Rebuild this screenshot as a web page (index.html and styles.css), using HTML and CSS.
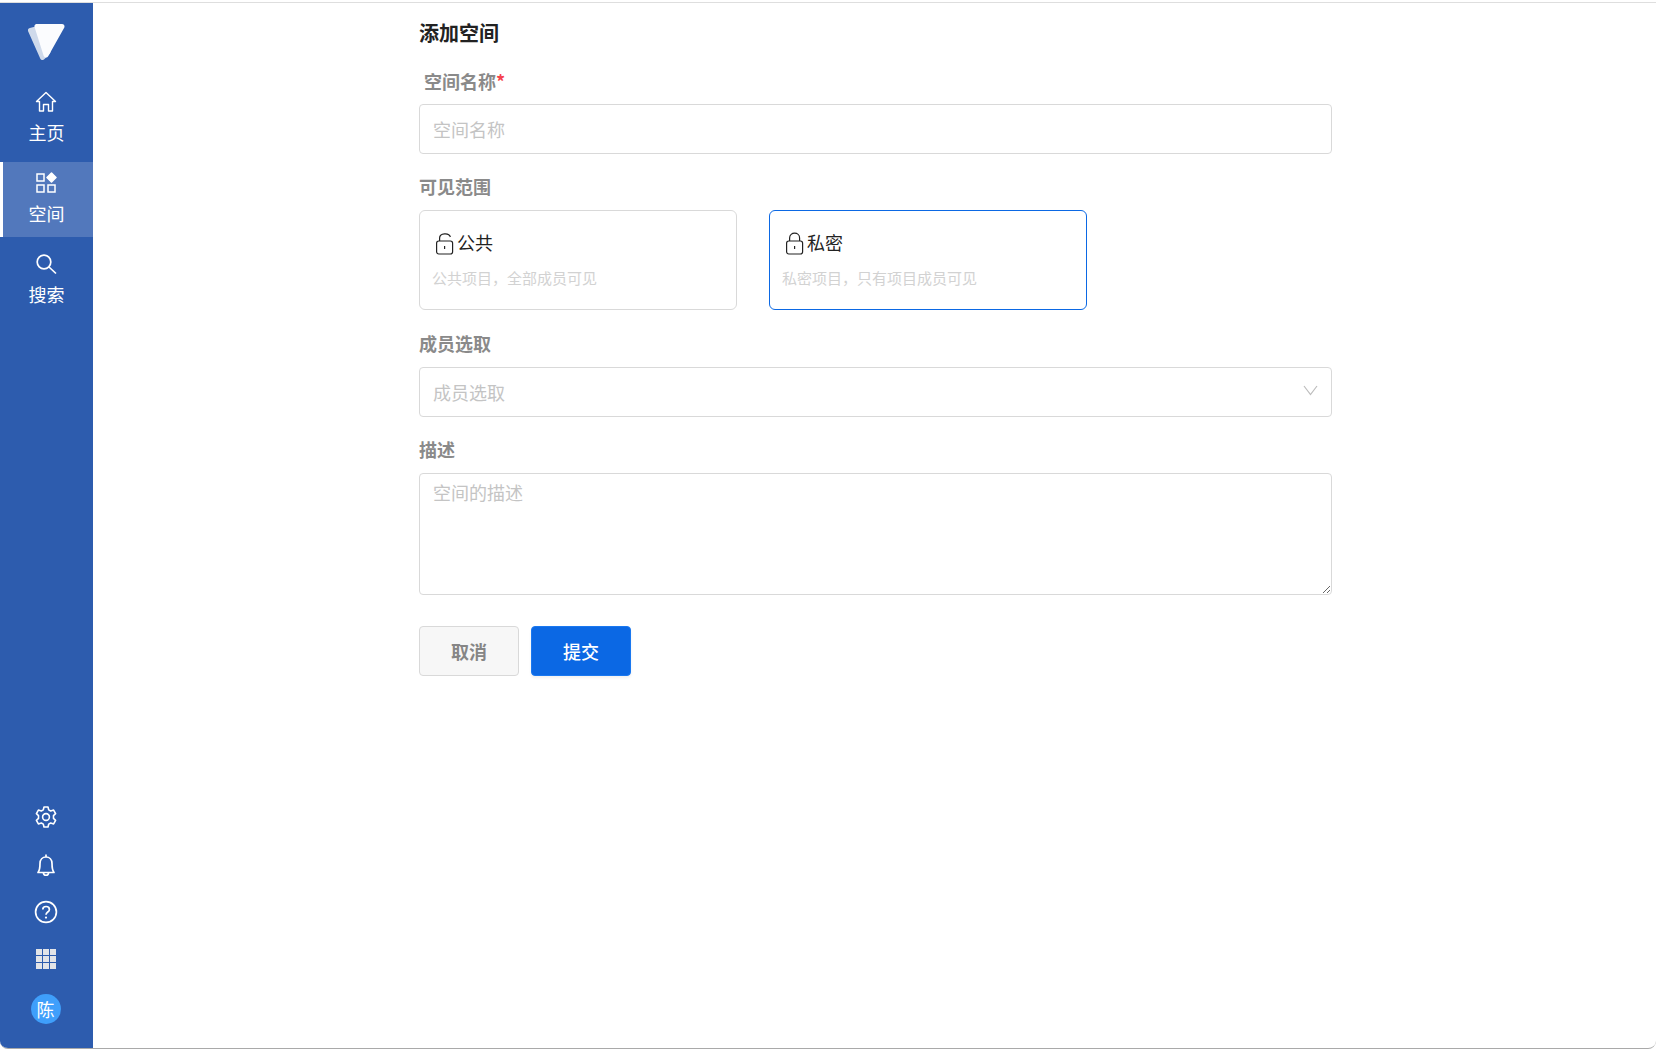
FILE: index.html
```html
<!DOCTYPE html>
<html lang="zh-CN">
<head>
<meta charset="utf-8">
<title>添加空间</title>
<link rel="stylesheet" href="styles.css">
</head>
<body>
<div class="app">
  <aside class="rail">
    <div class="rail-top">
      <div class="logo">
        <svg width="40" height="40" viewBox="0 0 40 40">
          <path d="M4.5 8.5 L16.5 35.5 L22 30 L14 6 Z" fill="#cfdaeb" stroke="#cfdaeb" stroke-width="5" stroke-linejoin="round"/>
          <path d="M11 4.5 L36 4.5 L20 33 Z" fill="#fbfcfe" stroke="#fbfcfe" stroke-width="5" stroke-linejoin="round"/>
        </svg>
      </div>
      <nav class="nav">
        <a class="nav-item">
          <svg class="nav-icon" viewBox="0 0 22 22" fill="none" stroke="#fff" stroke-width="1.4" stroke-linejoin="round"><path d="M11 1.5 L1.5 10.5 L4.5 10.5 L4.5 20 L8.5 20 L8.5 13.5 L13.5 13.5 L13.5 20 L17.5 20 L17.5 10.5 L20.5 10.5 Z"/></svg>
          <span>主页</span>
        </a>
        <a class="nav-item is-active">
          <svg class="nav-icon" viewBox="0 0 22 22" fill="none" stroke="#fff" stroke-width="1.5"><rect x="2" y="2" width="7" height="7"/><rect x="2" y="13" width="7" height="7"/><rect x="13" y="13" width="7" height="7"/><path d="M16.5 1 L21 5.5 L16.5 10 L12 5.5 Z" fill="#fff" stroke-linejoin="round"/></svg>
          <span>空间</span>
        </a>
        <a class="nav-item">
          <svg class="nav-icon" viewBox="0 0 22 22" fill="none" stroke="#fff" stroke-width="1.7"><circle cx="9" cy="9" r="6.8"/><path d="M14 14 L21 20.5"/></svg>
          <span>搜索</span>
        </a>
      </nav>
    </div>
    <div class="rail-bottom">
      <div class="rail-btn rail-btn-first">
        <svg width="24" height="24" viewBox="0 0 24 24" fill="none" stroke="#fff" stroke-width="1.6" stroke-linejoin="round"><circle cx="12" cy="12" r="3.4"/><path d="M10 2 h4 l.7 2.9 2 1.1 2.9-.9 2 3.5-2.1 2 v2.8 l2.1 2-2 3.5-2.9-.9-2 1.1-.7 2.9 h-4 l-.7-2.9-2-1.1-2.9.9-2-3.5 2.1-2 v-2.8 l-2.1-2 2-3.5 2.9.9 2-1.1 Z"/></svg>
      </div>
      <div class="rail-btn">
        <svg width="22" height="24" viewBox="0 0 22 24" fill="none" stroke="#fff" stroke-width="1.7" stroke-linejoin="round"><path d="M3 19.5 C5 17 5 14 5 10.5 C5 6.5 7.5 4 11 4 C14.5 4 17 6.5 17 10.5 C17 14 17 17 19 19.5 Z"/><path d="M11 1.5 V4 M8.5 20 C8.5 23 13.5 23 13.5 20"/></svg>
      </div>
      <div class="rail-btn">
        <svg width="24" height="24" viewBox="0 0 24 24" fill="none" stroke="#fff" stroke-width="1.7"><circle cx="12" cy="12" r="10.4"/><path d="M8.8 9.4 C8.8 5.5 15.4 5.5 15.4 9.4 C15.4 12 12 12 12 14.8"/><circle cx="12" cy="17.6" r="1.1" fill="#fff" stroke="none"/></svg>
      </div>
      <div class="rail-btn">
        <div class="apps"><i></i><i></i><i></i><i></i><i></i><i></i><i></i><i></i><i></i></div>
      </div>
      <div class="avatar">陈</div>
    </div>
  </aside>
  <main class="main">
    <form class="form">
      <h1 class="title">添加空间</h1>
      <div class="field field-name">
        <label class="label label-inset">空间名称<em class="req">*</em></label>
        <input class="control" type="text" placeholder="空间名称">
      </div>
      <div class="field field-scope">
        <label class="label">可见范围</label>
        <div class="cards">
          <div class="card">
            <div class="card-title">
              <svg class="lock" width="19" height="23" viewBox="0 0 19 23" fill="none" stroke="#222" stroke-width="1.2"><rect x="1.6" y="9" width="16" height="13" rx="2.2"/><path d="M4.6 9 V6 C4.6 1 14 0.2 15.4 5"/><path d="M9.6 14 V17"/></svg>
              <span>公共</span>
            </div>
            <p class="card-desc">公共项目，全部成员可见</p>
          </div>
          <div class="card is-selected">
            <div class="card-title">
              <svg class="lock" width="19" height="23" viewBox="0 0 19 23" fill="none" stroke="#222" stroke-width="1.2"><rect x="1.6" y="9" width="16" height="13" rx="2.2"/><path d="M4.6 9 V6 C4.6 -0.4 14.6 -0.4 14.6 6 V9"/><path d="M9.6 14 V17"/></svg>
              <span>私密</span>
            </div>
            <p class="card-desc">私密项目，只有项目成员可见</p>
          </div>
        </div>
      </div>
      <div class="field">
        <label class="label">成员选取</label>
        <div class="control select">
          <span class="placeholder">成员选取</span>
          <svg class="chevron" width="15" height="11" viewBox="0 0 15 11" fill="none" stroke="#bdbdbd" stroke-width="1.2"><path d="M1 1 L7.5 9.5 L14 1"/></svg>
        </div>
      </div>
      <div class="field">
        <label class="label">描述</label>
        <textarea class="control area" placeholder="空间的描述"></textarea>
      </div>
      <div class="actions">
        <button class="btn btn-cancel" type="button">取消</button>
        <button class="btn btn-submit" type="button">提交</button>
      </div>
    </form>
  </main>
</div>
</body>
</html>
```

FILE: styles.css
```css
* { box-sizing: border-box; }
html, body { margin: 0; height: 100%; background: #fff; }
body {
  font-family: "Noto Sans CJK SC", "Liberation Sans", sans-serif;
  padding-top: 2px;
}
.app {
  display: flex;
  height: 1047px;
  border-top: 1px solid #dedede;
  border-bottom: 1px solid #a9a9a9;
  border-radius: 0 0 8px 8px;
  overflow: hidden;
}
.rail {
  width: 93px;
  flex: none;
  background: #2d5cae;
  color: #fff;
  display: flex;
  flex-direction: column;
  justify-content: space-between;
}
.logo {
  height: 78px;
  padding: 19px 0 0 26px;
}
.logo svg { display: block; }
.nav { display: flex; flex-direction: column; gap: 6px; }
.nav-item {
  height: 75px;
  padding-top: 10px;
  display: flex;
  flex-direction: column;
  align-items: center;
  gap: 7px;
  font-size: 18px;
  line-height: 24px;
}
.nav-icon { width: 22px; height: 22px; flex: none; margin-right: 2px; }
.is-active {
  background: #5278bc;
  box-shadow: inset 3px 0 0 #fff;
}
.rail-bottom {
  display: flex;
  flex-direction: column;
  align-items: center;
  padding-bottom: 24px;
}
.rail-btn {
  height: 47px;
  width: 100%;
  padding-right: 2px;
  display: flex;
  align-items: center;
  justify-content: center;
}
.rail-btn-first { padding-bottom: 2px; }
.apps {
  display: grid;
  grid-template-columns: repeat(3, 6px);
  grid-auto-rows: 6px;
  gap: 1px;
}
.apps i { background: #e2e4e8; }
.avatar {
  width: 30px;
  height: 30px;
  margin: 12px 2px 0 0;
  border-radius: 50%;
  background: #3f9ffb;
  font-size: 18px;
  line-height: 30px;
  text-align: center;
}
.main { flex: 1; min-width: 0; padding-left: 326px; }
.form { width: 913px; display: flex; flex-direction: column; }
.title {
  margin: 16px 0 0;
  font-size: 20px;
  line-height: 28px;
  font-weight: 700;
  color: #222;
}
.field { margin-top: 20px; display: flex; flex-direction: column; }
.field-name { margin-top: 22px; }
.field-scope { padding-bottom: 1px; }
.label {
  display: block;
  margin-bottom: 12px;
  font-size: 18px;
  line-height: 24px;
  font-weight: 700;
  color: #8a8a8a;
}
.label-inset { padding-left: 5px; margin-bottom: 11px; }
.req { font-style: normal; color: #f5434e; }
.control {
  width: 100%;
  height: 50px;
  padding: 0 13px;
  border: 1px solid #d9d9d9;
  border-radius: 4px;
  background: #fff;
  outline: none;
  font-family: inherit;
  font-size: 18px;
  color: #333;
}
.control::placeholder, .placeholder { color: #c4c4c4; opacity: 1; }
.select {
  display: flex;
  align-items: center;
  justify-content: space-between;
  padding-right: 13px;
  padding-bottom: 1px;
}
.chevron { margin-bottom: 2px; }
.area {
  height: 122px;
  padding: 5px 13px;
  line-height: 26px;
  resize: both;
  display: block;
}
.cards { display: flex; gap: 32px; }
.card {
  width: 318px;
  height: 100px;
  padding: 17px 12px 0;
  border: 1px solid #d9d9d9;
  border-radius: 6px;
}
.card.is-selected { border-color: #0b68e4; }
.card-title {
  display: flex;
  align-items: center;
  gap: 3px;
  padding-left: 3px;
  height: 28px;
  font-size: 18px;
  line-height: 28px;
  color: #222;
}
.lock { margin-top: 3px; }
.card-desc {
  margin: 11px 0 0;
  font-size: 15px;
  line-height: 22px;
  color: #d2d2d2;
}
.actions { display: flex; gap: 12px; margin-top: 31px; }
.btn {
  width: 100px;
  height: 50px;
  border-radius: 4px;
  font-family: inherit;
  font-size: 18px;
}
.btn-cancel {
  background: #f7f7f7;
  border: 1px solid #d9d9d9;
  color: #868686;
  font-weight: 700;
}
.btn-submit {
  background: #0b68e4;
  border: 1px solid #1a78f0;
  color: #fff;
  font-weight: 500;
  box-shadow: 0 2px 3px rgba(0, 0, 0, .06);
}
```
